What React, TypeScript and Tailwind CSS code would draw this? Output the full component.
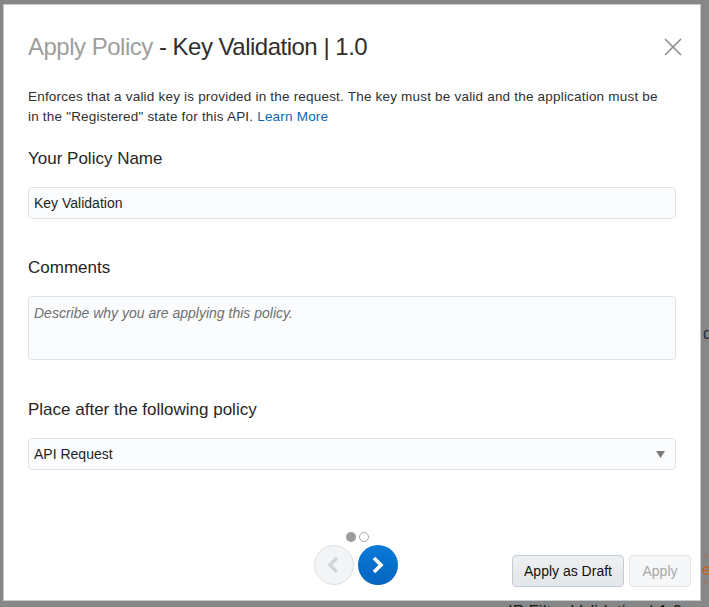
import React from 'react';

const font = { fontFamily: '"Liberation Sans", Arial, sans-serif' };

function CloseIcon() {
  return (
    <svg width="18" height="18" viewBox="0 0 18 18" fill="none">
      <path d="M1 1 L17 17 M17 1 L1 17" stroke="#8c8c8c" strokeWidth="1.6" />
    </svg>
  );
}

function Chevron({ dir, color }: { dir: 'left' | 'right'; color: string }) {
  const d = dir === 'right' ? 'M7 4 L14 11 L7 18' : 'M14 4 L7 11 L14 18';
  return (
    <svg width="22" height="22" viewBox="0 0 22 22" fill="none">
      <path d={d} stroke={color} strokeWidth="3.6" strokeLinecap="butt" strokeLinejoin="miter" />
    </svg>
  );
}

export default function App() {
  return (
    <div className="relative h-[607px] w-full overflow-hidden bg-[#878787]" style={font}>
      {/* page behind the overlay */}
      <span className="absolute left-[703px] top-[322px] text-[16px] text-[#1f2a3a]">d</span>
      <div className="absolute left-[698px] top-[555px] h-[28px] w-[20px] border border-dashed border-[#c2661a]" />
      <span className="absolute left-[702px] top-[557px] text-[17px] text-[#c2661a]">e</span>
      <span className="absolute left-[508px] top-[599px] text-[17px] text-[#1a1a1a]">IP Filter Validation | 1.0</span>

      <div className="relative ml-[3px] mt-[4px] flex h-[597px] w-[698px] flex-col border border-[#c4ccd4] bg-white">
        <div className="flex items-center justify-between pl-[24px] pr-[18px] pt-[26px]">
          <h1 className="text-[24px] leading-[32px] tracking-[-0.5px]">
            <span className="font-light text-[#9e9e9e]">Apply Policy</span>
            <span className="text-[#2f2f2f]"> - Key Validation | 1.0</span>
          </h1>
          <CloseIcon />
        </div>

        <div className="px-[24px]">
          <p className="mt-[24px] max-w-[636px] text-[13.5px] leading-[20px] tracking-[0.2px] text-[#2f2f2f]">
            Enforces that a valid key is provided in the request. The key must be valid and the application must be
            in the "Registered" state for this API. <span className="text-[#0b66b8]">Learn More</span>
          </p>

          <h2 className="mt-[20px] text-[17px] leading-[24px] text-[#262626]">Your Policy Name</h2>
          <div className="mt-[16px] flex h-[32px] items-center rounded-sm border border-[#dfe3e8] bg-[#fbfcfd] px-[5px] text-[14px] text-[#1f1f1f]">
            Key Validation
          </div>

          <h2 className="mt-[37px] text-[17px] leading-[24px] text-[#262626]">Comments</h2>
          <div className="mt-[16px] h-[64px] rounded-sm border border-[#dfe3e8] bg-[#fbfcfd] px-[5px] pt-[6px] text-[14px] italic leading-[20px] text-[#6f6f6f]">
            Describe why you are applying this policy.
          </div>

          <h2 className="mt-[38px] text-[17px] leading-[24px] text-[#262626]">Place after the following policy</h2>
          <div className="mt-[16px] flex h-[32px] items-center justify-between rounded-sm border border-[#dfe3e8] bg-[#fbfcfd] pl-[5px] pr-[10px] text-[14px] text-[#1f1f1f]">
            <span>API Request</span>
            <svg width="9" height="7" viewBox="0 0 9 7">
              <path d="M0 0 L9 0 L4.5 7 Z" fill="#7c7c7c" />
            </svg>
          </div>
        </div>

        <div className="mt-auto grid grid-cols-[1fr_auto_1fr] items-end pb-[13px]">
          <div />
          <div className="flex flex-col items-center pb-[2px] pl-[8px]">
            <div className="flex gap-[3px] pl-[2px]">
              <span className="h-[10px] w-[10px] rounded-full bg-[#9c9c9c]" />
              <span className="h-[10px] w-[10px] rounded-full border border-[#a8a8a8] bg-white" />
            </div>
            <div className="mt-[3px] flex gap-[4px]">
              <button className="flex h-[40px] w-[40px] items-center justify-center rounded-full border border-[#dde1e5] bg-[#f3f4f6]">
                <Chevron dir="left" color="#d3d5d8" />
              </button>
              <button className="flex h-[40px] w-[40px] items-center justify-center rounded-full bg-gradient-to-b from-[#0a7ad9] to-[#0565bf]">
                <Chevron dir="right" color="#ffffff" />
              </button>
            </div>
          </div>
          <div className="flex justify-end gap-[5px] pr-[9px]">
            <button className="h-[32px] w-[112px] rounded-sm border border-[#c3cbd3] bg-gradient-to-b from-[#eef0f2] to-[#e2e6e9] text-[14px] text-[#111]">
              Apply as Draft
            </button>
            <button className="h-[32px] w-[62px] rounded-sm border border-[#e0e4e8] bg-[#f6f7f8] text-[14px] text-[#a9a9a9]">
              Apply
            </button>
          </div>
        </div>
      </div>
    </div>
  );
}
